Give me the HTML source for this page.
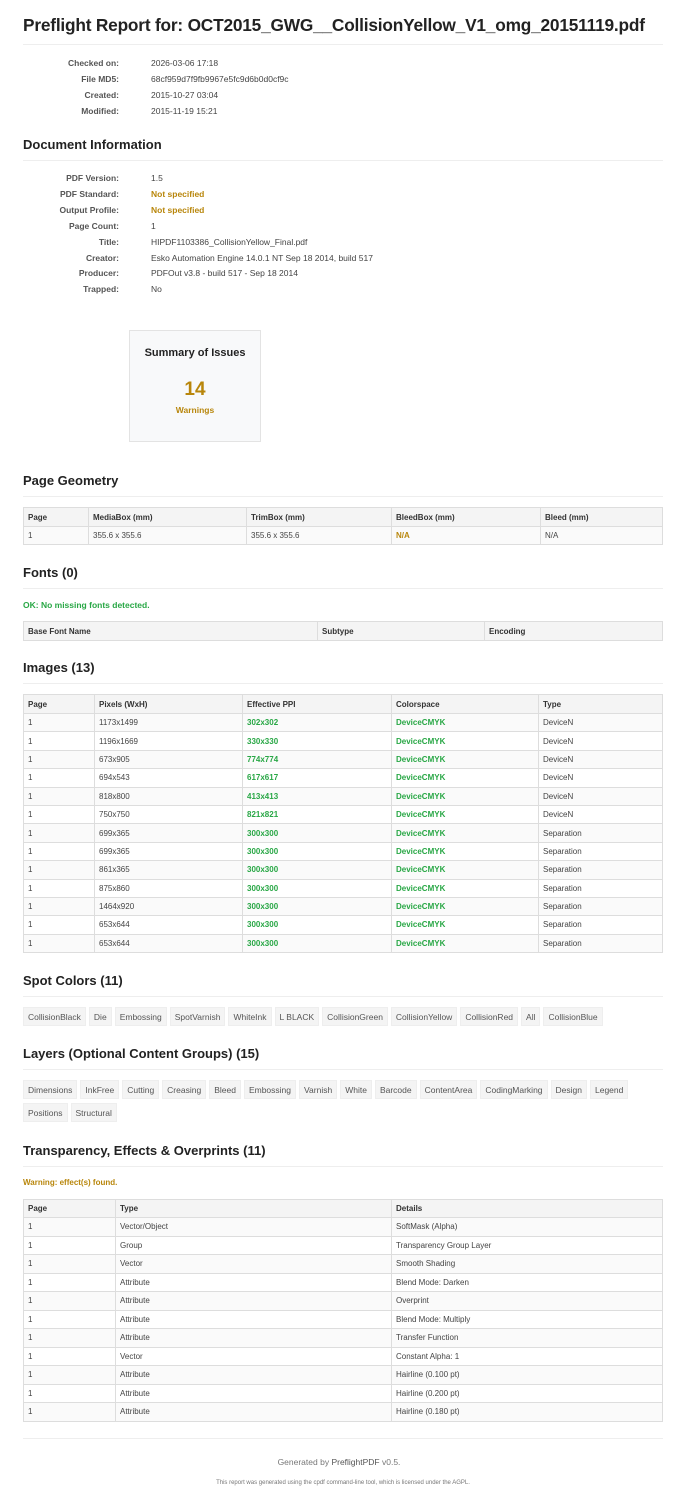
<!DOCTYPE html>
<html><head><meta charset="utf-8"><style>
*{margin:0;padding:0;box-sizing:border-box}
body{width:678px;height:1500px;background:#fff;font-family:"Liberation Sans",sans-serif;color:#333;position:relative;overflow:hidden}
.a{position:absolute}
h1{position:absolute;left:23px;top:15px;font-size:17.3px;font-weight:bold;color:#222;white-space:nowrap;letter-spacing:-0.2px}
h2{position:absolute;left:23px;font-size:13px;font-weight:bold;color:#222;white-space:nowrap}
.hr{position:absolute;left:23px;width:640px;height:1px;background:#eee}
.kv{position:absolute;left:0;width:678px;font-size:8.5px;white-space:nowrap}
.k{position:absolute;right:559px;font-weight:bold;color:#555;text-align:right}
.v{position:absolute;left:151px;color:#444}
.y{color:#b8860b;font-weight:bold}
.g{color:#28a745;font-weight:bold}
table{position:absolute;left:23px;width:640px;border-collapse:collapse;font-size:8px;color:#444}
td,th{border:1px solid #ddd;padding:0 4px;text-align:left;white-space:nowrap}
th{background:#f4f4f4;font-weight:bold;color:#333}
tr:nth-child(even) td{background:#fafafa}
.tags{position:absolute;left:23px;width:640px;font-size:8.5px;color:#555}
.tags span{display:inline-block;background:#f4f4f4;border:1px solid #eee;padding:0 4px;height:19px;line-height:19px;margin:0 3px 4px 0}
</style></head><body>
<h1>Preflight Report for: OCT2015_GWG__CollisionYellow_V1_omg_20151119.pdf</h1>
<div class="hr" style="top:44px"></div>
<div class="kv" style="top:0">
<div class="k" style="top:58px">Checked on:</div><div class="v" style="top:58px">2026-03-06 17:18</div>
<div class="k" style="top:74px">File MD5:</div><div class="v" style="top:74px">68cf959d7f9fb9967e5fc9d6b0d0cf9c</div>
<div class="k" style="top:90px">Created:</div><div class="v" style="top:90px">2015-10-27 03:04</div>
<div class="k" style="top:106px">Modified:</div><div class="v" style="top:106px">2015-11-19 15:21</div>
</div>
<h2 style="top:137px">Document Information</h2>
<div class="hr" style="top:160px"></div>
<div class="kv" style="top:0">
<div class="k" style="top:173px">PDF Version:</div><div class="v" style="top:173px">1.5</div>
<div class="k" style="top:189px">PDF Standard:</div><div class="v y" style="top:189px">Not specified</div>
<div class="k" style="top:205px">Output Profile:</div><div class="v y" style="top:205px">Not specified</div>
<div class="k" style="top:221px">Page Count:</div><div class="v" style="top:221px">1</div>
<div class="k" style="top:237px">Title:</div><div class="v" style="top:237px">HIPDF1103386_CollisionYellow_Final.pdf</div>
<div class="k" style="top:253px">Creator:</div><div class="v" style="top:253px">Esko Automation Engine 14.0.1 NT Sep 18 2014, build 517</div>
<div class="k" style="top:268px">Producer:</div><div class="v" style="top:268px">PDFOut v3.8 - build 517 - Sep 18 2014</div>
<div class="k" style="top:284px">Trapped:</div><div class="v" style="top:284px">No</div>
</div>
<div class="a" style="left:129px;top:330px;width:132px;height:112px;background:#f8f9fa;border:1px solid #e3e3e3;text-align:center">
<div style="margin-top:16px;font-size:11px;font-weight:bold;color:#222">Summary of Issues</div>
<div style="margin-top:20px;font-size:19px;font-weight:bold;color:#b8860b">14</div>
<div style="margin-top:4px;font-size:8.5px;font-weight:bold;color:#b8860b">Warnings</div>
</div>
<h2 style="top:473px">Page Geometry</h2>
<div class="hr" style="top:496px"></div>
<table style="top:507px"><tr style="height:19px"><th style="width:65px">Page</th><th style="width:158px">MediaBox (mm)</th><th style="width:145px">TrimBox (mm)</th><th style="width:149px">BleedBox (mm)</th><th>Bleed (mm)</th></tr>
<tr style="height:18px"><td>1</td><td>355.6 x 355.6</td><td>355.6 x 355.6</td><td class="y">N/A</td><td>N/A</td></tr></table>
<h2 style="top:565px">Fonts (0)</h2>
<div class="hr" style="top:588px"></div>
<div class="a g" style="left:23px;top:600px;font-size:8.5px">OK: No missing fonts detected.</div>
<table style="top:621px"><tr style="height:19px"><th style="width:294px">Base Font Name</th><th style="width:167px">Subtype</th><th>Encoding</th></tr></table>
<h2 style="top:660px">Images (13)</h2>
<div class="hr" style="top:683px"></div>
<table style="top:694px"><tr style="height:19px"><th style="width:71px">Page</th><th style="width:148px">Pixels (WxH)</th><th style="width:149px">Effective PPI</th><th style="width:147px">Colorspace</th><th>Type</th></tr>
<tr style="height:18.4px"><td>1</td><td>1173x1499</td><td class="g">302x302</td><td class="g">DeviceCMYK</td><td>DeviceN</td></tr>
<tr style="height:18.4px"><td>1</td><td>1196x1669</td><td class="g">330x330</td><td class="g">DeviceCMYK</td><td>DeviceN</td></tr>
<tr style="height:18.4px"><td>1</td><td>673x905</td><td class="g">774x774</td><td class="g">DeviceCMYK</td><td>DeviceN</td></tr>
<tr style="height:18.4px"><td>1</td><td>694x543</td><td class="g">617x617</td><td class="g">DeviceCMYK</td><td>DeviceN</td></tr>
<tr style="height:18.4px"><td>1</td><td>818x800</td><td class="g">413x413</td><td class="g">DeviceCMYK</td><td>DeviceN</td></tr>
<tr style="height:18.4px"><td>1</td><td>750x750</td><td class="g">821x821</td><td class="g">DeviceCMYK</td><td>DeviceN</td></tr>
<tr style="height:18.4px"><td>1</td><td>699x365</td><td class="g">300x300</td><td class="g">DeviceCMYK</td><td>Separation</td></tr>
<tr style="height:18.4px"><td>1</td><td>699x365</td><td class="g">300x300</td><td class="g">DeviceCMYK</td><td>Separation</td></tr>
<tr style="height:18.4px"><td>1</td><td>861x365</td><td class="g">300x300</td><td class="g">DeviceCMYK</td><td>Separation</td></tr>
<tr style="height:18.4px"><td>1</td><td>875x860</td><td class="g">300x300</td><td class="g">DeviceCMYK</td><td>Separation</td></tr>
<tr style="height:18.4px"><td>1</td><td>1464x920</td><td class="g">300x300</td><td class="g">DeviceCMYK</td><td>Separation</td></tr>
<tr style="height:18.4px"><td>1</td><td>653x644</td><td class="g">300x300</td><td class="g">DeviceCMYK</td><td>Separation</td></tr>
<tr style="height:18.4px"><td>1</td><td>653x644</td><td class="g">300x300</td><td class="g">DeviceCMYK</td><td>Separation</td></tr></table>
<h2 style="top:973px">Spot Colors (11)</h2>
<div class="hr" style="top:996px"></div>
<div class="tags" style="top:1007px"><span>CollisionBlack</span><span>Die</span><span>Embossing</span><span>SpotVarnish</span><span>WhiteInk</span><span>L BLACK</span><span>CollisionGreen</span><span>CollisionYellow</span><span>CollisionRed</span><span>All</span><span>CollisionBlue</span></div>
<h2 style="top:1046px">Layers (Optional Content Groups) (15)</h2>
<div class="hr" style="top:1069px"></div>
<div class="tags" style="top:1080px"><span>Dimensions</span><span>InkFree</span><span>Cutting</span><span>Creasing</span><span>Bleed</span><span>Embossing</span><span>Varnish</span><span>White</span><span>Barcode</span><span>ContentArea</span><span>CodingMarking</span><span>Design</span><span>Legend</span><span>Positions</span><span>Structural</span></div>
<h2 style="top:1143px">Transparency, Effects &amp; Overprints (11)</h2>
<div class="hr" style="top:1166px"></div>
<div class="a y" style="left:23px;top:1178px;font-size:8px">Warning: effect(s) found.</div>
<table style="top:1199px"><tr style="height:18px"><th style="width:92px">Page</th><th style="width:276px">Type</th><th>Details</th></tr>
<tr style="height:18.5px"><td>1</td><td>Vector/Object</td><td>SoftMask (Alpha)</td></tr>
<tr style="height:18.5px"><td>1</td><td>Group</td><td>Transparency Group Layer</td></tr>
<tr style="height:18.5px"><td>1</td><td>Vector</td><td>Smooth Shading</td></tr>
<tr style="height:18.5px"><td>1</td><td>Attribute</td><td>Blend Mode: Darken</td></tr>
<tr style="height:18.5px"><td>1</td><td>Attribute</td><td>Overprint</td></tr>
<tr style="height:18.5px"><td>1</td><td>Attribute</td><td>Blend Mode: Multiply</td></tr>
<tr style="height:18.5px"><td>1</td><td>Attribute</td><td>Transfer Function</td></tr>
<tr style="height:18.5px"><td>1</td><td>Vector</td><td>Constant Alpha: 1</td></tr>
<tr style="height:18.5px"><td>1</td><td>Attribute</td><td>Hairline (0.100 pt)</td></tr>
<tr style="height:18.5px"><td>1</td><td>Attribute</td><td>Hairline (0.200 pt)</td></tr>
<tr style="height:18.5px"><td>1</td><td>Attribute</td><td>Hairline (0.180 pt)</td></tr></table>
<div class="hr" style="top:1438px"></div>
<div class="a" style="left:0;width:678px;top:1457px;text-align:center;font-size:8.5px;color:#777">Generated by <span style="color:#555">PreflightPDF</span> v0.5.</div>
<div class="a" style="left:0;width:686px;top:1480px;text-align:center;font-size:6px;color:#777">This report was generated using the cpdf command-line tool, which is licensed under the AGPL.</div>
</body></html>
